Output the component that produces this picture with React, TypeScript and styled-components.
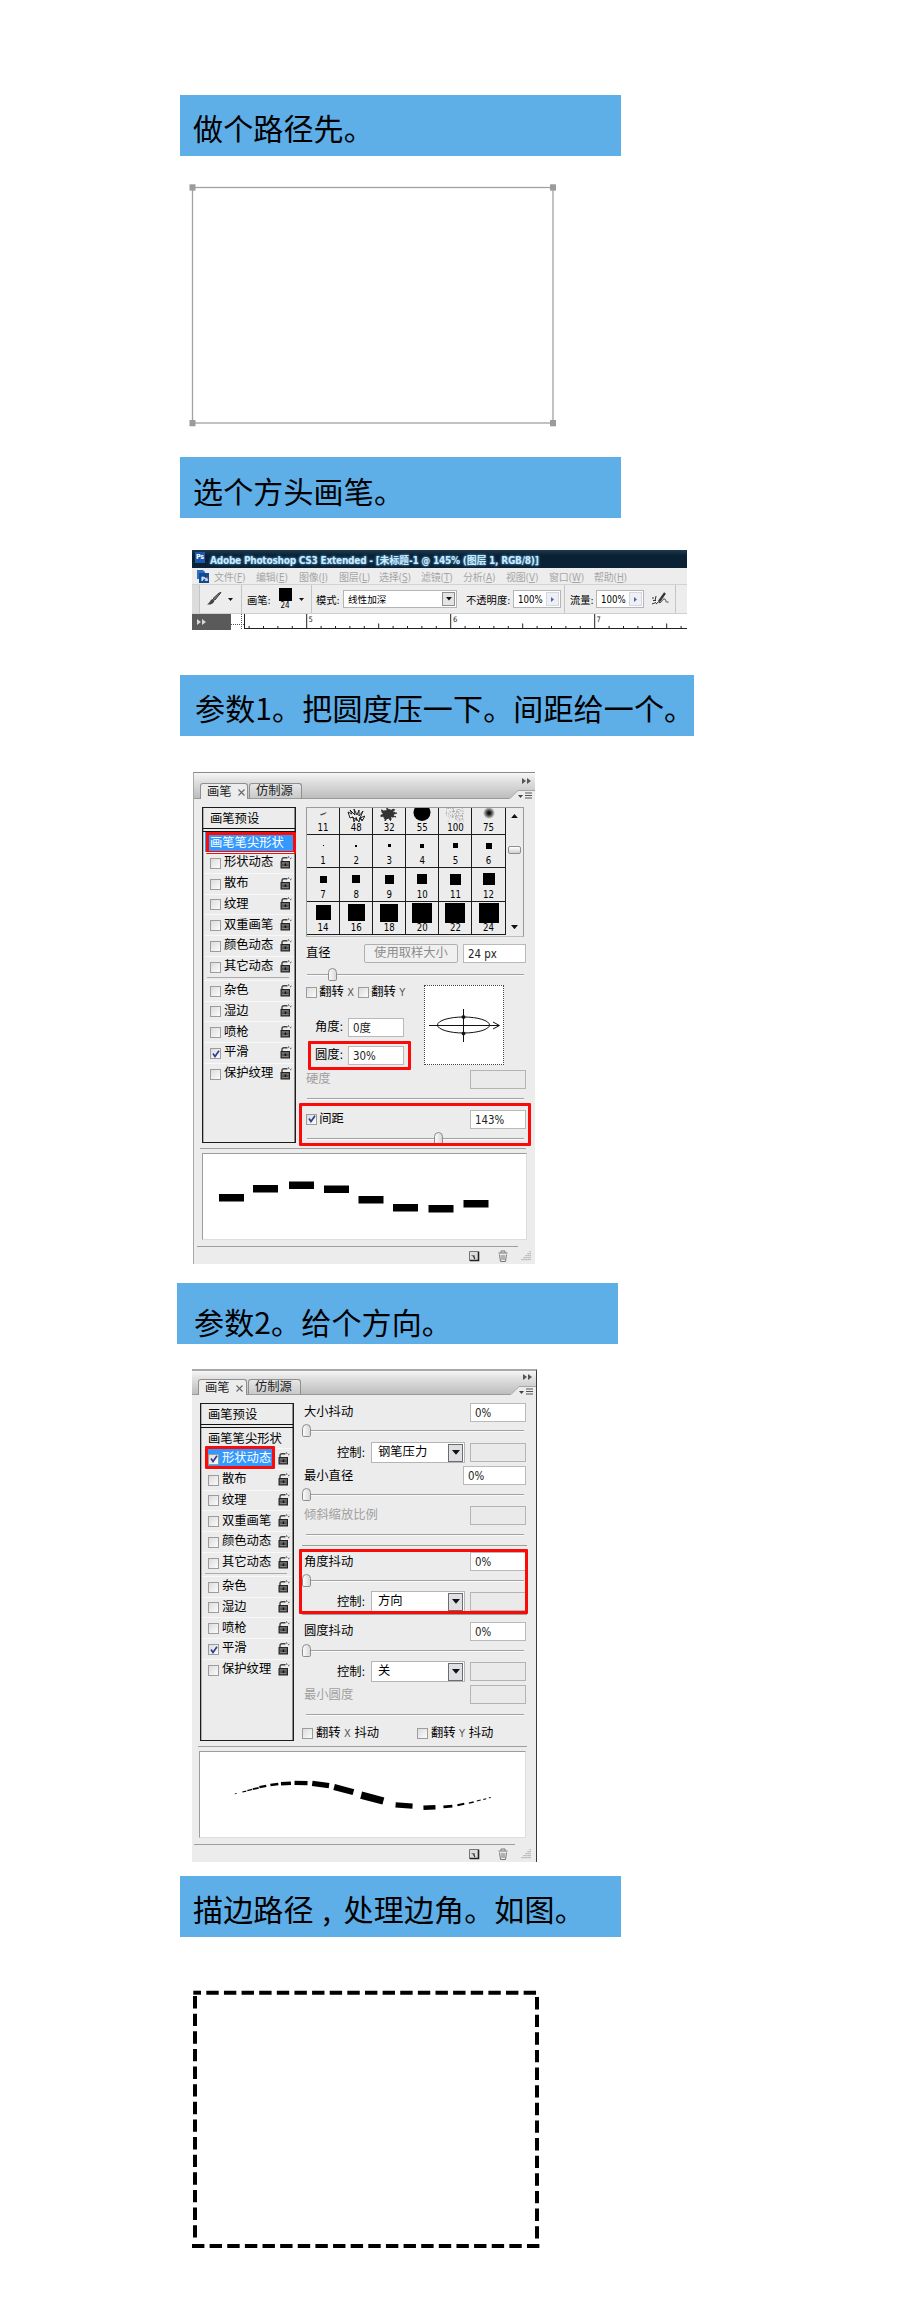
import React from 'react';
import styled, { createGlobalStyle, css } from 'styled-components';

const Global = createGlobalStyle`
  * { box-sizing: border-box; }
  body { margin: 0; background: #fff; }
`;

const ui = '"DejaVu Sans Condensed", "Noto Sans", "Noto Sans CJK SC", sans-serif';
const cjk = '"Noto Sans CJK SC", sans-serif';

const Page = styled.main`
  width: 900px;
  height: 2312px;
  padding: 95px 0 0 180px;
  display: flex;
  flex-direction: column;
  align-items: flex-start;
  overflow: hidden;
  font-family: ${cjk};
  color: #000;
`;

const Banner = styled.h2<{ $w?: number; $mt?: number; $ml?: number; $pt?: number; $pl?: number }>`
  flex: none;
  width: ${p => p.$w ?? 441}px;
  height: 61px;
  margin: ${p => p.$mt ?? 0}px 0 0 ${p => p.$ml ?? 0}px;
  padding: ${p => p.$pt ?? 2}px 0 0 ${p => p.$pl ?? 13}px;
  background: #5eaee7;
  font-size: 30px;
  line-height: 61px;
  letter-spacing: 0.15px;
  font-weight: 400;
  white-space: nowrap;
`;

const Comma = styled.span`
  display: inline-block;
  width: 30px;
  text-indent: 9px;
`;

const Figure = styled.figure<{ $mt: number; $ml: number }>`
  flex: none;
  margin: ${p => p.$mt}px 0 0 ${p => p.$ml}px;
  svg { display: block; }
`;

/* ---------- Application bar ---------- */

const AppBar = styled.section`
  flex: none;
  width: 495px;
  height: 80px;
  margin: 32px 0 0 12px;
  background: #ededed;
  overflow: hidden;
  font-family: ${ui};
`;

const TitleBar = styled.div`
  display: flex;
  align-items: center;
  height: 18px;
  padding-left: 3px;
  background: linear-gradient(#1d3a50, #0a2134 30%, #0b2236);
  color: #cfeafa;
  font-size: 10px;
  font-weight: 700;
  white-space: pre;
  text-shadow: 0 0 3px #4b93c4, 0 0 2px #3f85b5;
`;

const PsBadge = styled.span`
  width: 10px;
  height: 11px;
  margin: 0 5px 4px 0;
  background: #1c57b0;
  color: #fff;
  font-size: 7px;
  line-height: 11px;
  text-align: center;
  text-shadow: none;
`;

const TitleText = styled.span`
  letter-spacing: -0.23px;
`;

const MenuBar = styled.nav`
  display: flex;
  align-items: center;
  height: 17px;
  padding-left: 4px;
  color: #a6a6a6;
  font-size: 10px;
  border-bottom: 1px solid #d2d2d2;
  svg { margin-right: 4px; flex: none; }
`;

const MenuItem = styled.span<{ $w: number }>`
  flex: none;
  width: ${p => p.$w}px;
  white-space: nowrap;
  letter-spacing: -0.2px;
  u { text-underline-offset: 1px; }
`;

const OptionBar = styled.div`
  display: flex;
  align-items: center;
  height: 29px;
  font-size: 10.3px;
  border-bottom: 1px solid #cfcfcf;
  white-space: nowrap;
  svg { flex: none; }
`;

const Grip = styled.i`
  flex: none;
  width: 8px;
  height: 28px;
  margin-right: 6px;
  background: #dcdcdc;
  border-right: 1px solid #c4c4c4;
`;

const Divider = styled.i<{ $l?: number; $r?: number }>`
  flex: none;
  width: 1px;
  height: 28px;
  margin: 0 ${p => p.$r ?? 5}px 0 ${p => p.$l ?? 7}px;
  background: #c4c4c4;
`;

const Label = styled.span<{ $w: number }>`
  flex: none;
  width: ${p => p.$w}px;
`;

const Swatch = styled.span`
  display: flex;
  flex: none;
  flex-direction: column;
  align-items: center;
  width: 14px;
  height: 22px;
  margin: 0 7px 0 6px;
  font-size: 8px;
  line-height: 9px;
  &::before {
    content: '';
    width: 13px;
    height: 13px;
    background: #000;
    flex: none;
  }
`;

const BarField = styled.span<{ $w: number }>`
  display: flex;
  flex: none;
  align-items: center;
  justify-content: space-between;
  width: ${p => p.$w}px;
  height: 18px;
  padding: 1px 1px 1px 4px;
  border: 1px solid #b5b5b5;
  background: #fff;
  font-size: 9.6px;
`;

const StepButton = styled.span<{ $soft?: boolean }>`
  display: grid;
  place-items: center;
  width: 13px;
  height: 14px;
  border: 1px solid ${p => (p.$soft ? '#d3d7df' : '#8e8e8e')};
  background: ${p => (p.$soft ? '#eef0f5' : '#e4e4e4')};
`;

const Ruler = styled.div`
  display: flex;
  height: 16px;
  background: #fff;
  svg { display: block; }
`;

const RulerCorner = styled.div`
  display: flex;
  align-items: center;
  width: 39px;
  height: 16px;
  padding-left: 5px;
  background: #5a5a5a;
`;

const Down = ({ w = 6, c = '#111' }: { w?: number; c?: string }) => (
  <svg width={w} height={w * 0.6} viewBox="0 0 10 6"><path d="M0 0h10L5 6z" fill={c} /></svg>
);

const Up = ({ w = 6 }: { w?: number }) => (
  <svg width={w} height={w * 0.6} viewBox="0 0 10 6"><path d="M0 6h10L5 0z" fill="#111" /></svg>
);

const Right = () => (
  <svg width="3" height="5" viewBox="0 0 3 5"><path d="M0 0l3 2.5L0 5z" fill="#5068a0" /></svg>
);

const DoubleArrow = ({ c = '#555' }: { c?: string }) => (
  <svg width="9" height="6" viewBox="0 0 9 6"><path d="M0 0l4 3-4 3zM5 0l4 3-4 3z" fill={c} /></svg>
);

const menus: [string, string, number][] = [
  ['文件', 'F', 42], ['编辑', 'E', 43], ['图像', 'I', 40], ['图层', 'L', 40], ['选择', 'S', 42],
  ['滤镜', 'T', 42], ['分析', 'A', 43], ['视图', 'V', 43], ['窗口', 'W', 45], ['帮助', 'H', 40],
];

const ticks = Array.from({ length: 31 }, (_, i) => {
  const n = i - 4;
  const x = 75.7 + n * 14.4;
  const h = n % 10 === 0 ? 15 : n % 5 === 0 ? 5 : 2.5;
  return <path key={i} d={`M${x} 14.5v-${h}`} />;
});

function Toolbar() {
  return (
    <AppBar>
      <TitleBar>
        <PsBadge>Ps</PsBadge>
        <TitleText>Adobe Photoshop CS3 Extended - [未标题-1 @ 145% (图层 1, RGB/8)]</TitleText>
      </TitleBar>
      <MenuBar>
        <svg width="14" height="15" viewBox="0 0 14 15">
          <path d="M1 1h6l2 2v7H1z" fill="#2f6fc4" />
          <path d="M3 4h10v10H3z" fill="#124a94" />
          <text x="5" y="12" fontSize="6" fill="#fff" fontWeight="700">Ps</text>
        </svg>
        {menus.map(([t, k, w]) => (
          <MenuItem key={k} $w={w}>{t}(<u>{k}</u>)</MenuItem>
        ))}
      </MenuBar>
      <OptionBar>
        <Grip />
        <svg width="16" height="14" viewBox="0 0 16 14">
          <path d="M15 0.5L9 8 7 6.5 13 1z" fill="#777" stroke="#222" strokeWidth="0.8" />
          <path d="M8.5 8.5C7.500 12 4 13 1 12.500 4 11 4 7.500 7 7z" fill="#444" />
        </svg>
        <Label $w={6} />
        <Down w={5} />
        <Divider $l={8} $r={5} />
        <Label $w={25}>画笔:</Label>
        <Swatch>24</Swatch>
        <Down w={5} />
        <Divider $l={7} $r={4} />
        <Label $w={27}>模式:</Label>
        <BarField $w={114}>线性加深<StepButton><Down w={6} /></StepButton></BarField>
        <Label $w={9} />
        <Label $w={47}>不透明度:</Label>
        <BarField $w={48}>100%<StepButton $soft><Right /></StepButton></BarField>
        <Divider $l={3} $r={5} />
        <Label $w={26}>流量:</Label>
        <BarField $w={48}>100%<StepButton $soft><Right /></StepButton></BarField>
        <Label $w={7} />
        <svg width="18" height="14" viewBox="0 0 18 14" fill="none" stroke="#333">
          <path d="M14 1L8 9.500" strokeWidth="2.200" />
          <path d="M8 9.500L5 12" />
          <path d="M1 12l4-1.500M8 10.500c3 1 3-4 5.500-3.500s0 4 4 3M1 6h2M2 8.500h3M5 4l-1 5" />
        </svg>
        <Divider $l={6} $r={0} />
      </OptionBar>
      <Ruler>
        <RulerCorner><DoubleArrow c="#d8d8d8" /></RulerCorner>
        <svg width="456" height="16" viewBox="0 0 456 16" fontFamily={ui}>
          <path d="M0 10.500h14M10.500 0v16" stroke="#555" strokeDasharray="1 1" />
          <path d="M13.500 0v14M13 14.500h443" stroke="#222" strokeWidth="1" />
          <g stroke="#222">{ticks}</g>
          <g fontSize="7.500" fill="#222">
            <text x="77.500" y="8">5</text>
            <text x="222" y="8">6</text>
            <text x="365.500" y="8">7</text>
          </g>
        </svg>
      </Ruler>
    </AppBar>
  );
}

/* ---------- Brush panel ---------- */

const Panel = styled.section<{ $w: number; $h: number; $mt: number; $ml: number; $edge?: boolean }>`
  flex: none;
  display: flex;
  flex-direction: column;
  width: ${p => p.$w}px;
  height: ${p => p.$h}px;
  margin: ${p => p.$mt}px 0 0 ${p => p.$ml}px;
  background: #ececec;
  border-top: ${p => (p.$edge ? 2 : 1)}px solid ${p => (p.$edge ? '#a8a8a8' : '#8a8a8a')};
  ${p => (p.$edge ? css`border-right: 1px solid #3a3a3a;` : css`border-left: 1px solid #a9a9a9;`)}
  font-family: ${ui};
  font-size: 12.3px;
  line-height: 1;
`;

const TabBar = styled.header<{ $h: number; $pl: number }>`
  display: flex;
  flex: none;
  align-items: flex-end;
  height: ${p => p.$h}px;
  padding-left: ${p => p.$pl}px;
  background: linear-gradient(#f6f6f6, #e2e2e2 30%, #bdbdbd);
  border-bottom: 1px solid #9a9a9a;
`;

const Tab = styled.div<{ $w: number; $active?: boolean }>`
  display: flex;
  align-items: center;
  gap: 6px;
  width: ${p => p.$w}px;
  height: 16px;
  margin: 0 ${p => (p.$active ? 1 : 2)}px -1px 0;
  padding: 1px 0 0 6px;
  border: 1px solid #8f8f8f;
  border-bottom: ${p => (p.$active ? '0' : '1px solid #9a9a9a')};
  border-radius: 3px 3px 0 0;
  background: ${p => (p.$active ? '#ececec' : 'linear-gradient(#e6e6e6, #c9c9c9)')};
  color: #222;
  white-space: nowrap;
`;

const PanelMenu = styled.div`
  display: flex;
  flex-direction: column;
  align-items: flex-end;
  margin: 0 0 -1px auto;
  svg { display: block; }
  svg:first-child { margin: 0 4px 6px 0; }
`;

const Body = styled.div`
  display: flex;
  flex: none;
  height: 349px;
  padding-top: 8px;
`;

const List = styled.div<{ $ml: number; $h: number }>`
  flex: none;
  width: 94px;
  height: ${p => p.$h}px;
  margin-left: ${p => p.$ml}px;
  border: 1px solid #1c1c1c;
  box-shadow: inset -1px 0 #8a8a8a, inset 1px 0 #b0b0b0;
`;

const ListHead = styled.div`
  height: 24px;
  padding: 5px 0 0 7px;
  border-bottom: 1px solid #111;
  background: linear-gradient(#111, #111) 0 20px / 100% 1px no-repeat;
`;

const TipRow = styled.div<{ $on: boolean }>`
  position: relative;
  height: 20px;
  margin: 0 1px;
  padding: 5px 0 0 6px;
  white-space: nowrap;
  color: ${p => (p.$on ? '#fff' : '#000')};
  background: ${p => (p.$on ? 'linear-gradient(#3399ff, #3399ff) 1px 0 / 89px 20px no-repeat' : 'none')};
`;

const ItemRow = styled.div<{ $on?: boolean }>`
  position: relative;
  display: flex;
  align-items: center;
  height: 20.8px;
  margin: 0 1px;
  padding: 1px 2px 0 6px;
  border-top: 1px solid #f8f8f8;
  color: ${p => (p.$on ? '#fff' : '#000')};
  background: ${p => (p.$on ? 'linear-gradient(#3399ff, #3399ff) 4px 0 / 66px 19px no-repeat' : 'none')};
`;

const ItemName = styled.span`
  flex: 1;
  margin: -2px 0 0 3px;
  white-space: nowrap;
`;

const GroupLine = styled.hr`
  height: 1px;
  margin: 0 6px 2px 4px;
  border: 0;
  background: #aaa;
`;

const Mark = styled.i<{ $inset: string }>`
  position: absolute;
  inset: ${p => p.$inset};
  border: 3px solid #fb0a0a;
  border-radius: 1px;
`;

const Box = styled.span`
  display: grid;
  flex: none;
  place-items: center;
  width: 11px;
  height: 11px;
  border: 1px solid #9c9c9c;
  background: linear-gradient(135deg, #dcdcdc, #fbfbfb);
`;

const Check = ({ on }: { on?: boolean }) => (
  <Box>
    {on && (
      <svg width="8" height="8" viewBox="0 0 8 8" fill="none" stroke="#2f3f92" strokeWidth="1.700">
        <path d="M1 3.500l2 3L7 0.800" />
      </svg>
    )}
  </Box>
);

const LockIcon = styled.svg`
  flex: none;
  margin-top: -2px;
`;

const Lock = () => (
  <LockIcon width="12" height="13" viewBox="0 0 12 13" fill="none">
    <path d="M2 6V3.500Q2 1.700 4 1.700h3.500" stroke="#444" strokeWidth="1.400" />
    <path d="M8.500 0.300l0.500 1.700M11.500 2l-1.500 1" stroke="#555" />
    <rect x="1" y="5.500" width="8.500" height="6.500" fill="#555" stroke="#222" />
    <path d="M2 7h6.500M2 10.500h6.500" stroke="#929292" strokeWidth="0.700" />
    <rect x="4.700" y="7.500" width="1.500" height="2.500" fill="#111" />
  </LockIcon>
);

const groups = [
  ['形状动态', '散布', '纹理', '双重画笔', '颜色动态', '其它动态'],
  ['杂色', '湿边', '喷枪', '平滑', '保护纹理'],
];

function BrushList({ ml, h, active }: { ml: number; h: number; active: 'tip' | 'shape' }) {
  const tip = active === 'tip';
  return (
    <List $ml={ml} $h={h}>
      <ListHead>画笔预设</ListHead>
      <TipRow $on={tip}>画笔笔尖形状{tip && <Mark $inset="0 -2px -2px 2px" />}</TipRow>
      {groups.map((g, gi) => (
        <React.Fragment key={gi}>
          {gi === 1 && <GroupLine />}
          {g.map(name => {
            const on = !tip && name === '形状动态';
            return (
              <ItemRow key={name} $on={on}>
                <Check on={on || name === '平滑'} />
                <ItemName>{name}</ItemName>
                <Lock />
                {on && <Mark $inset="-3px 17px 0 3px" />}
              </ItemRow>
            );
          })}
        </React.Fragment>
      ))}
    </List>
  );
}

const Pane = styled.div<{ $pl: number; $mt?: number }>`
  flex: 1;
  margin-top: ${p => p.$mt ?? 0}px;
  padding-left: ${p => p.$pl}px;
`;

const Row = styled.div<{ $mt?: number; $h?: number; $pl?: number; $dim?: boolean }>`
  position: relative;
  display: flex;
  align-items: center;
  height: ${p => p.$h ?? 20}px;
  margin-top: ${p => p.$mt ?? 0}px;
  padding-left: ${p => p.$pl ?? 0}px;
  white-space: nowrap;
  color: ${p => (p.$dim ? '#a0a0a0' : '#000')};
`;

const Caption = styled.span<{ $w: number }>`
  flex: none;
  width: ${p => p.$w}px;
  padding-top: 1px;
`;

const Latin = styled.span`
  color: #555;
  font-size: 11px;
`;

const Field = styled.span<{ $w?: number; $off?: boolean }>`
  flex: none;
  width: ${p => p.$w ?? 56}px;
  height: 19px;
  padding-left: 4px;
  border: 1px solid ${p => (p.$off ? '#b4b4b4' : '#b9b9b9')};
  background: ${p => (p.$off ? '#eaeaea' : '#fff')};
  color: #222;
  font-size: 11.4px;
  line-height: 18px;
`;

const SampleButton = styled.span`
  width: 94px;
  height: 19px;
  margin-right: 5px;
  border: 1px solid #b0b0b0;
  border-radius: 2px;
  background: #f0f0f0;
  color: #8c8c8c;
  line-height: 17px;
  text-align: center;
`;

const Select = styled.span`
  display: flex;
  flex: none;
  align-items: center;
  justify-content: space-between;
  width: 94px;
  height: 21px;
  margin-right: 5px;
  padding: 0 1px 0 6px;
  border: 1px solid #b5b5b5;
  background: #fff;
`;

const SelectArrow = styled.span`
  display: grid;
  place-items: center;
  width: 15px;
  height: 18px;
  border: 1px solid #6c6c6c;
  background: #dfe0e4;
`;

const Track = styled.div<{ $mt: number; $ml?: number; $w?: number }>`
  display: flex;
  align-items: center;
  width: ${p => p.$w ?? 217}px;
  height: 13px;
  margin: ${p => p.$mt}px 0 0 ${p => p.$ml ?? 1}px;
  background: linear-gradient(#a2a2a2, #a2a2a2) 0 6px / 100% 1px no-repeat, linear-gradient(#fafafa, #fafafa) 0 7px / 100% 1px no-repeat;
`;

const Thumb = styled.i<{ $x: number }>`
  width: 9px;
  height: 13px;
  margin-left: ${p => p.$x}px;
  border: 1px solid #8c8c8c;
  border-radius: 5px 5px 2px 2px;
  background: linear-gradient(90deg, #fafafa, #d9d9d9);
`;

const Rule = styled.hr<{ $mt: number; $ml: number; $w: number }>`
  flex: none;
  width: ${p => p.$w}px;
  height: 1px;
  margin: ${p => p.$mt}px 0 0 ${p => p.$ml}px;
  border: 0;
  background: #9e9e9e;
`;

const Preview = styled.div<{ $ml: number; $w: number }>`
  flex: none;
  width: ${p => p.$w}px;
  height: 87px;
  margin: 4px 0 0 ${p => p.$ml}px;
  border: 1px solid #ddd;
  border-top-color: #9c9c9c;
  border-left-color: #9c9c9c;
  background: #fff;
  svg { display: block; }
`;

const PanelFoot = styled.footer<{ $pl: number }>`
  display: flex;
  align-items: center;
  padding: 3px 0 0 ${p => p.$pl}px;
  svg:nth-child(2) { margin-left: 18px; }
  svg:nth-child(3) { margin-left: 13px; }
`;

function Header({ h, pl, w1, w2 }: { h: number; pl: number; w1: number; w2: number }) {
  return (
    <TabBar $h={h} $pl={pl}>
      <Tab $w={w1} $active>
        画笔
        <svg width="7" height="7" viewBox="0 0 7 7"><path d="M0.500 0.500l6 6M6.500 0.500l-6 6" stroke="#666" strokeWidth="1.100" /></svg>
      </Tab>
      <Tab $w={w2}>仿制源</Tab>
      <PanelMenu>
        <DoubleArrow />
        <svg width="26" height="9" viewBox="0 0 26 9">
          <path d="M0 9L9 0.500H26V9z" fill="#ececec" />
          <path d="M0 8.500h1L9 0.500H26" fill="none" stroke="#a5a5a5" />
          <path d="M9 5h5l-2.500 3z" fill="#444" />
          <path d="M16 3h7M16 5.500h7M16 8h7" stroke="#555" />
        </svg>
      </PanelMenu>
    </TabBar>
  );
}

function Foot({ ruleMl, pl }: { ruleMl: number; pl: number }) {
  return (
    <>
      <Rule $mt={6} $ml={ruleMl} $w={321} />
      <PanelFoot $pl={pl}>
        <svg width="11" height="11" viewBox="0 0 11 11" fill="none">
          <path d="M1 1h8v8H1z" fill="#ddd" /><path d="M9.500 0.500v9H1" stroke="#222" strokeWidth="1.600" />
          <path d="M0.500 10V0.500h9M2.500 4.500h3v4" stroke="#777" /><path d="M4 5l2 3" stroke="#222" />
        </svg>
        <svg width="10" height="12" viewBox="0 0 10 12" fill="none" stroke="#777">
          <path d="M0.500 3h9M3 2.500V1h4v1.500M1.500 4.500l1 7h5l1-7M4 5v5M6 5v5" />
        </svg>
        <svg width="10" height="10" viewBox="0 0 10 10" fill="#a5a5a5">
          {[0, 1, 2, 3, 4].map(r => Array.from({ length: r + 1 }, (_, c) => (
            <rect key={`${r}-${c}`} x={8.5 - c * 2} y={r * 2} width="1.200" height="1.200" />
          )))}
        </svg>
      </PanelFoot>
    </>
  );
}

const BrushGridBox = styled.div`
  display: flex;
  width: 218px;
  height: 130px;
  border: 1px solid #9a9a9a;
  border-bottom-color: #bdbdbd;
`;

const Cells = styled.div`
  display: grid;
  grid-template-columns: repeat(6, 33.1px);
  grid-template-rows: 27px 33px 33.500px 33.500px;
`;

const Cell = styled.div`
  display: flex;
  flex-direction: column;
  align-items: center;
  justify-content: flex-end;
  border-right: 1px solid #1d1d1d;
  border-bottom: 1px solid #1d1d1d;
  font-size: 9.6px;
  line-height: 10px;
  padding-bottom: 1px;
  overflow: hidden;
`;

const Dab = styled.i<{ $s: number }>`
  display: grid;
  flex: none;
  place-items: center;
  height: 21px;
  &::before {
    content: '';
    width: ${p => p.$s}px;
    height: ${p => p.$s}px;
    background: #000;
  }
`;

const TipIcon = styled.span`
  flex: none;
  height: 15px;
  svg { display: block; }
`;

const Scroller = styled.div`
  display: flex;
  flex: 1;
  flex-direction: column;
  align-items: center;
  padding: 6px 0 7px 1px;
`;

const ScrollThumb = styled.i`
  width: 13px;
  height: 8px;
  margin: 28px 0 auto;
  border: 1px solid #8f8f8f;
  border-radius: 2px;
  background: linear-gradient(#fff, #d0d0d0);
`;

const scribble = 'M1 4l4 2-2-4 5 5-1-6 3 6 2-5 0 6 4-5-3 7 5-2-3 5-2-3-1 4-3-4-2 4-1-5-3 1zM5 9l3 2M12 10l4 2M9 9l1 4';
const specks = Array.from({ length: 90 }, (_, i) => [(i * i * 3.1 + i * 7.3) % 17, (i * i * 1.7 + i * 5.9) % 13]);

const topTips: [number, React.ReactNode][] = [
  [11, <path key="a" d="M6 6.500l7-2.500-2 2-4 1.500z" fill="#444" />],
  [48, <path key="b" d={scribble} stroke="#111" strokeWidth="0.900" fill="none" />],
  [32, <path key="c" d="M1 2l5 1 1-3 3 2 5-1-2 3 4 1-4 2 3 2-5 0 0 4-3-3-3 3-1-4-4-1 3-2zM6 5l5 3M9 3l-2 5" fill="#333" stroke="#333" strokeDasharray="2 1.500" />],
  [55, <circle key="d" cx="9" cy="4.500" r="8.500" fill="#000" />],
  [100, <g key="e" fill="#999">{specks.map(([x, y], i) => <rect key={i} x={x} y={y} width="0.800" height="0.800" />)}</g>],
  [75, <g key="f"><radialGradient id="soft"><stop offset="0.200" stopColor="#111" /><stop offset="0.600" stopColor="#777" /><stop offset="1" stopColor="#ececec" /></radialGradient><circle cx="9" cy="5" r="6" fill="url(#soft)" /></g>],
];

const squareTips: [number, number][] = [
  [1, 1], [2, 2], [3, 3], [4, 4], [5, 5], [6, 6], [7, 7], [8, 8], [9, 9], [10, 10], [11, 11], [12, 12],
  [14, 15], [16, 17], [18, 18], [20, 20], [22, 20], [24, 20],
];

const Split = styled.div`
  display: flex;
`;

const SplitLeft = styled.div`
  width: 118px;
`;

const AngleBox = styled.div`
  width: 80px;
  height: 80px;
  margin-top: 4px;
  border: 1px dotted #444;
  background: #fff;
  svg { display: block; }
`;

const dashes = [[33, 44], [67, 35], [103, 31.5], [138, 35.5], [172.5, 46], [207, 54], [242.5, 55], [277.5, 50]];

function TipPanel() {
  return (
    <Panel $w={342} $h={492} $mt={36} $ml={13}>
      <Header h={26} pl={6} w1={48} w2={53} />
      <Body>
        <BrushList ml={8} h={336} active="tip" />
        <Pane $pl={10}>
          <BrushGridBox>
            <Cells>
              {topTips.map(([n, art]) => (
                <Cell key={n}><TipIcon><svg width="18" height="14" viewBox="0 0 18 14">{art}</svg></TipIcon>{n}</Cell>
              ))}
              {squareTips.map(([n, s]) => <Cell key={n}><Dab $s={s} />{n}</Cell>)}
            </Cells>
            <Scroller>
              <Up w={7} />
              <ScrollThumb />
              <Down w={7} />
            </Scroller>
          </BrushGridBox>
          <Row $mt={6}>
            <Caption $w={58}>直径</Caption>
            <SampleButton>使用取样大小</SampleButton>
            <Field $w={63}>24 px</Field>
          </Row>
          <Track $mt={5}><Thumb $x={21} /></Track>
          <Split>
            <SplitLeft>
              <Row $mt={5} $h={12}>
                <Check /><Caption $w={41}>&thinsp;翻转 <Latin>X</Latin></Caption>
                <Check /><Caption $w={40}>&thinsp;翻转 <Latin>Y</Latin></Caption>
              </Row>
              <Row $mt={19} $pl={9}><Caption $w={33}>角度:</Caption><Field>0度</Field></Row>
              <Row $mt={8} $pl={9}>
                <Caption $w={33}>圆度:</Caption><Field>30%</Field>
                <Mark $inset="-4px 13px -5px 2px" />
              </Row>
            </SplitLeft>
            <AngleBox>
              <svg width="78" height="78" viewBox="0 0 78 78" fill="none" stroke="#111">
                <ellipse cx="38.500" cy="39" rx="26" ry="8" />
                <path d="M4 39.500h70M68 36l6.500 3.500-6.500 3.500M38.500 23v33" />
                <circle cx="38.500" cy="31" r="1.500" fill="#111" />
                <circle cx="38.500" cy="47.500" r="1.500" fill="#111" />
              </svg>
            </AngleBox>
          </Split>
          <Row $mt={4} $dim><Caption $w={164}>硬度</Caption><Field $off /></Row>
          <Track $mt={3} />
          <Row $mt={4}>
            <Check on /><Caption $w={153}>&thinsp;间距</Caption><Field>143%</Field>
            <Mark $inset="-6px 4px -17px -7px" />
          </Row>
          <Track $mt={3}><Thumb $x={127} /></Track>
        </Pane>
      </Body>
      <Rule $mt={0} $ml={6} $w={326} />
      <Preview $ml={8} $w={325}>
        <svg width="323" height="85" viewBox="0 0 323 85">
          {dashes.map(([x, y]) => <rect key={x} x={x - 17} y={y - 4} width="25" height="7.500" />)}
        </svg>
      </Preview>
      <Foot ruleMl={3} pl={275} />
    </Panel>
  );
}

const Flip = styled.span<{ $w: number }>`
  display: flex;
  align-items: center;
  gap: 3px;
  width: ${p => p.$w}px;
`;

const Group = styled.div`
  position: relative;
`;

interface JitterProps { name: string; mt: number; h?: number; w?: number; control?: string; controlMt?: number; sliderMt?: number }

function Jitter({ name, mt, h = 20, w = 56, control, controlMt = 4, sliderMt = 3 }: JitterProps) {
  return (
    <>
      <Row $mt={mt} $h={h} $pl={2}><Caption $w={222 - w}>{name}</Caption><Field $w={w}>0%</Field></Row>
      <Track $mt={sliderMt} $ml={0} $w={222}><Thumb $x={0} /></Track>
      {control && (
        <Row $mt={controlMt} $h={21} $pl={35}>
          <Caption $w={34}>控制:</Caption>
          <Select>{control}<SelectArrow><Down w={8} /></SelectArrow></Select>
          <Field $off />
        </Row>
      )}
    </>
  );
}

// x, y, length, thickness, tilt of each dab along the pressure stroke
const strokes: [number, number, number, number, number][] = [
  [36, 42.5, 2, 0.8, -15], [44.5, 40.5, 4, 1.2, -14], [50, 39, 5, 1.4, -14], [56, 37.5, 6, 1.7, -13], [63, 35.5, 7, 2.2, -11], [74.5, 33.5, 8, 2.6, -8],
  [86, 32.5, 10, 3.4, -3], [101, 32, 13, 4.4, 1], [120.500, 33.5, 17, 5.2, 8], [143.5, 38.5, 20, 6.2, 15],
  [172, 47, 23, 7.4, 15], [204, 54.5, 17, 5.4, 4], [229.5, 56.5, 12, 4.4, -2], [248, 55.5, 9, 2.8, -6],
  [261, 53.5, 7, 2, -11], [271.5, 51.5, 5, 1.4, -13], [279, 49.5, 4, 1.1, -14], [285, 48, 3, 1, -14], [290, 46.7, 2, 0.8, -14],
];

function ShapePanel() {
  return (
    <Panel $w={345} $h={493} $mt={25} $ml={12} $edge>
      <Header h={24} pl={6} w1={49} w2={53} />
      <Body>
        <BrushList ml={8} h={338} active="shape" />
        <Pane $pl={8} $mt={-1}>
          <Jitter name="大小抖动" mt={0} sliderMt={2} control="钢笔压力" controlMt={5} />
          <Jitter name="最小直径" mt={3} h={19} w={63} />
          <Row $mt={4} $pl={2} $dim><Caption $w={166}>倾斜缩放比例</Caption><Field $off /></Row>
          <Track $mt={3} $ml={4} $w={218} />
          <Rule $mt={4} $ml={0} $w={225} />
          <Group>
            <Jitter name="角度抖动" mt={6} h={19} control="方向" />
            <Mark $inset="-3px 8px -2px -3px" />
          </Group>
          <Rule $mt={2} $ml={0} $w={225} />
          <Jitter name="圆度抖动" mt={6} control="关" />
          <Row $mt={3} $h={19} $pl={2} $dim><Caption $w={166}>最小圆度</Caption><Field $off /></Row>
          <Track $mt={4} $ml={4} $w={218} />
          <Row $mt={6} $h={12}>
            <Flip $w={115}><Check /><span>翻转 <Latin>X</Latin> 抖动</span></Flip>
            <Flip $w={90}><Check /><span>翻转 <Latin>Y</Latin> 抖动</span></Flip>
          </Row>
        </Pane>
      </Body>
      <Rule $mt={2} $ml={6} $w={329} />
      <Preview $ml={7} $w={327}>
        <svg width="325" height="85" viewBox="0 0 325 85">
          {strokes.map(([x, y, w, h, a]) => (
            <rect key={x} x={x - w / 2} y={y - h / 2 - 1} width={w} height={h} transform={`rotate(${a} ${x} ${y})`} />
          ))}
        </svg>
      </Preview>
      <Foot ruleMl={2} pl={277} />
    </Panel>
  );
}

/* ---------- Page ---------- */

export default function App() {
  return (
    <>
      <Global />
      <Page>
        <Banner>做个路径先。</Banner>
        <Figure $mt={28} $ml={9}>
          <svg width="368" height="243" viewBox="0 0 368 243">
            <rect x="3.500" y="3.500" width="360.500" height="235.500" fill="none" stroke="#a2a2a2" strokeWidth="1.300" />
            <g fill="#9b9b9b">
              <rect x="0.500" y="0.300" width="6" height="6.300" />
              <rect x="361" y="0.300" width="6" height="6.300" />
              <rect x="0.500" y="236" width="6" height="6.300" />
              <rect x="361" y="236" width="6" height="6.300" />
            </g>
          </svg>
        </Figure>
        <Banner $mt={30} $pt={3}>选个方头画笔。</Banner>
        <Toolbar />
        <Banner $w={514} $mt={45} $pl={15}>参数1。把圆度压一下。间距给一个。</Banner>
        <TipPanel />
        <Banner $mt={19} $ml={-3} $pt={8} $pl={17}>参数2。给个方向。</Banner>
        <ShapePanel />
        <Banner $mt={14} $pt={2} $pl={13}>描边路径<Comma>,</Comma>处理边角。如图。</Banner>
        <Figure $mt={52} $ml={12}>
          <svg width="350" height="260" viewBox="0 0 350 260" fill="none" stroke="#000" strokeWidth="4">
            <path d="M1.300 3.700H9" />
            <path d="M14.300 3.700H345" strokeDasharray="12.400 5.230" />
            <path d="M3 7V249" strokeDasharray="12.400 5.230" />
            <path d="M345 8V250" strokeDasharray="12.400 5.230" />
            <path d="M0 257H348" strokeDasharray="12.400 5.230" />
          </svg>
        </Figure>
      </Page>
    </>
  );
}
